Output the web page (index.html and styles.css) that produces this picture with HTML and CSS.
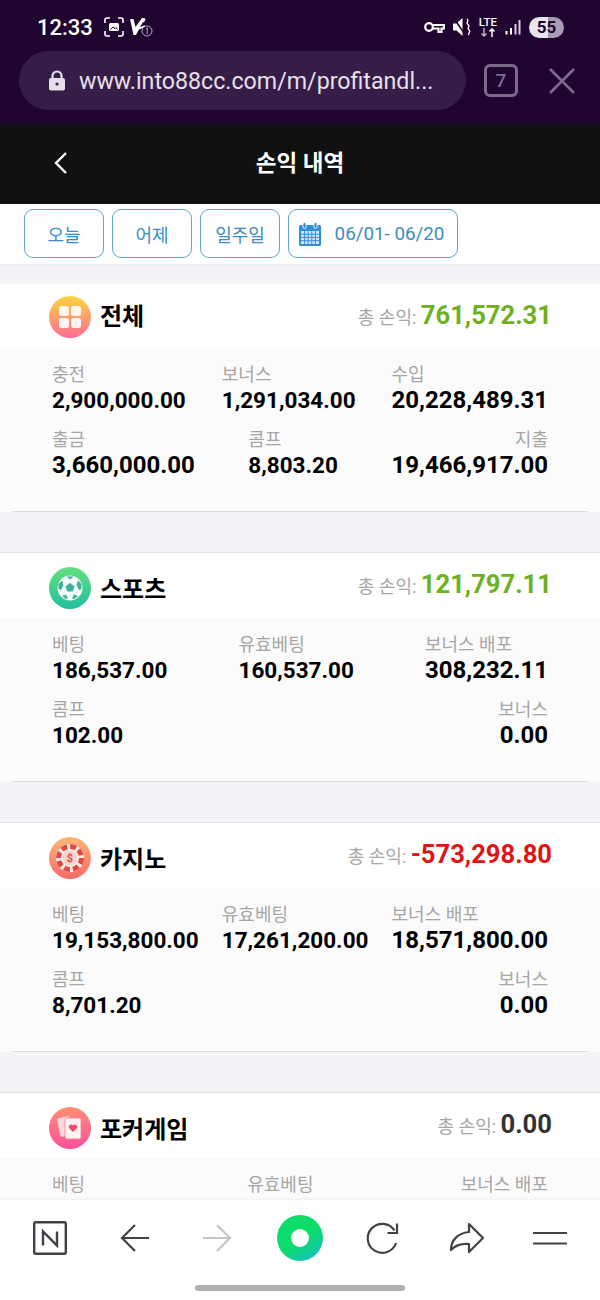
FILE: index.html
```html
<!DOCTYPE html>
<html lang="ko">
<head>
    <meta charset="UTF-8">
    <meta name="viewport" content="width=device-width, initial-scale=1.0">
    <title>손익 내역</title>
    <link rel="stylesheet" href="styles.css">
</head>
<body>
    <div class="browser-top">
        <div class="status-bar">
            <div class="status-left">
                <span class="clock">12:33</span>
                <svg class="status-icon" width="20" height="20" viewBox="0 0 20 20" fill="none" stroke="#fff" stroke-width="1.6">
                    <path d="M1 6V3a2 2 0 0 1 2-2h3M14 1h3a2 2 0 0 1 2 2v3M19 14v3a2 2 0 0 1-2 2h-3M6 19H3a2 2 0 0 1-2-2v-3"/>
                    <rect x="5" y="6" width="10" height="8" rx="1.5" fill="#fff" stroke="none"/>
                    <path d="M6.5 12.5l2.5-2.5 2 1.5 1-1 1.500 2" stroke="#1f0530" stroke-width="1"/>
                </svg>
                <svg class="status-icon" width="24" height="22" viewBox="0 0 24 22">
                    <path d="M1 3h3.500l2 8L13 2h3L7 19H4.500z" fill="#fff"/>
                    <path d="M9 13l7-3M14 6l2-3" stroke="#fff" stroke-width="1.800"/>
                    <circle cx="18" cy="15" r="5" fill="#1f0530" stroke="#b9aec2" stroke-width="1"/>
                    <path d="M17 12.800l1.200-.8v6" fill="none" stroke="#b9aec2" stroke-width="1"/>
                </svg>
            </div>
            <div class="status-right">
                <svg width="21" height="13" viewBox="0 0 21 13" fill="none" stroke="#fff" stroke-width="2.200">
                    <circle cx="5" cy="6" r="3.800"/>
                    <path d="M8.800 4H20v3.500h-2.500V11h-3V7.500H8.800"/>
                </svg>
                <svg width="18" height="20" viewBox="0 0 18 20">
                    <path d="M0 6.500h3.500L9.500 1v18l-6-5.500H0z" fill="#fff"/>
                    <path d="M1 1.500l11 16" stroke="#1f0530" stroke-width="1.500"/>
                    <path d="M14 2c2.500 2-1.500 3.500 1 5.500s-1.500 3.500 1 5.500-1.500 3 0 5" fill="none" stroke="#fff" stroke-width="1.400"/>
                </svg>
                <div class="lte">
                    <span>LTE</span>
                    <svg width="16" height="9" viewBox="0 0 16 9" fill="none" stroke-width="1.500">
                        <path d="M4 0v8M1.500 5.500L4 8l2.500-2.500" stroke="#b9aec2"/>
                        <path d="M12 9V1M9.500 3.500L12 1l2.500 2.500" stroke="#fff"/>
                    </svg>
                </div>
                <svg width="16" height="16" viewBox="0 0 16 16" fill="#fff">
                    <rect x="0.500" y="12" width="2" height="3.500"/>
                    <rect x="5" y="9" width="2" height="6.500"/>
                    <rect x="9.500" y="5" width="2" height="10.500" fill="#d8d0de"/>
                    <rect x="13.500" y="1" width="2" height="14.500" fill="#d8d0de"/>
                </svg>
                <span class="battery">55</span>
            </div>
        </div>
        <div class="url-row">
            <div class="url-bar">
                <svg width="18" height="21" viewBox="0 0 18 21">
                    <path d="M4.500 9V6a4.500 4.500 0 0 1 9 0v3" fill="none" stroke="#e4dfe8" stroke-width="2.200"/>
                    <rect x="1" y="8" width="16" height="12.500" rx="2" fill="#e4dfe8"/>
                    <circle cx="9" cy="14" r="1.600" fill="#361d47"/>
                </svg>
                <span class="url-text">www.into88cc.com/m/profitandl...</span>
            </div>
            <div class="tab-count">7</div>
            <svg class="url-close" width="28" height="28" viewBox="0 0 28 28" stroke="#7d6a8b" stroke-width="2.600">
                <path d="M2 2l24 24M26 2L2 26"/>
            </svg>
        </div>
    </div>

    <div class="main">
        <div class="page-head">
            <svg class="back" width="16" height="24" viewBox="0 0 16 24" fill="none" stroke="#fff" stroke-width="2.400">
                <path d="M13 2L3 12l10 10"/>
            </svg>
            <h1>손익 내역</h1>
        </div>

        <div class="filters">
            <button class="filter">오늘</button>
            <button class="filter">어제</button>
            <button class="filter">일주일</button>
            <button class="filter filter-date">
                <svg width="22" height="24" viewBox="0 0 22 24">
                    <rect x="0" y="3" width="22" height="21" rx="1.500" fill="#2f8fdc"/>
                    <rect x="4" y="0.500" width="3" height="6" rx="1.500" fill="#2f8fdc" stroke="#fff" stroke-width="0.800"/>
                    <rect x="15" y="0.500" width="3" height="6" rx="1.500" fill="#2f8fdc" stroke="#fff" stroke-width="0.800"/>
                    <path d="M2 9h18v13H2z" fill="#d3e7f8"/>
                    <path d="M2 12.200h18M2 15.400h18M2 18.700h18M5.600 9v13M9.200 9v13M12.800 9v13M16.400 9v13" stroke="#2f8fdc" stroke-width="1"/>
                </svg>
                <span>06/01- 06/20</span>
            </button>
        </div>

        <div class="card card-first">
            <div class="card-head">
                <svg class="game-icon" width="42" height="42" viewBox="0 0 42 42">
                    <defs>
                        <linearGradient id="grad-all" x1="0" y1="0" x2="0" y2="1">
                            <stop offset="0" stop-color="#ffd53d"/>
                            <stop offset="1" stop-color="#fb6c97"/>
                        </linearGradient>
                    </defs>
                    <circle cx="21" cy="21" r="21" fill="url(#grad-all)"/>
                    <g fill="#fff" fill-opacity="0.900">
                        <rect x="10" y="10" width="10" height="10" rx="2.500"/>
                        <rect x="22" y="10" width="10" height="10" rx="2.500"/>
                        <rect x="10" y="22" width="10" height="10" rx="2.500"/>
                        <rect x="22" y="22" width="10" height="10" rx="2.500"/>
                    </g>
                </svg>
                <h2>전체</h2>
                <div class="total">총 손익: <b class="plus">761,572.31</b></div>
            </div>
            <div class="card-body">
                <div class="stat-row">
                    <div class="stat"><span>충전</span><b>2,900,000.00</b></div>
                    <div class="stat"><span>보너스</span><b>1,291,034.00</b></div>
                    <div class="stat stat-big"><span>수입</span><b>20,228,489.31</b></div>
                </div>
                <div class="stat-row">
                    <div class="stat stat-big"><span>출금</span><b>3,660,000.00</b></div>
                    <div class="stat"><span>콤프</span><b>8,803.20</b></div>
                    <div class="stat stat-big stat-right"><span>지출</span><b>19,466,917.00</b></div>
                </div>
            </div>
        </div>

        <div class="card">
            <div class="card-head">
                <svg class="game-icon" width="42" height="42" viewBox="0 0 42 42">
                    <defs>
                        <linearGradient id="grad-sports" x1="0" y1="0" x2="0" y2="1">
                            <stop offset="0" stop-color="#63e07c"/>
                            <stop offset="1" stop-color="#21bfa0"/>
                        </linearGradient>
                    </defs>
                    <circle cx="21" cy="21" r="21" fill="url(#grad-sports)"/>
                    <circle cx="21" cy="21" r="12.500" fill="#f4fbf8"/>
                    <g fill="#3cb398">
                        <path d="M21 16l4.500 3.300-1.700 5.300h-5.600l-1.700-5.300z"/>
                        <path d="M17.500 9.500h7L21 12.500z"/>
                        <path d="M9.500 17l3.500-3.500 1.500 4.500-2.500 5-2.500-1z"/>
                        <path d="M32.500 17L29 13.500 27.500 18l2.500 5 2.500-1z"/>
                        <path d="M13 29l4-1.500 2 4-2 .5z"/>
                        <path d="M29 29l-4-1.500-2 4 2 .5z"/>
                    </g>
                </svg>
                <h2>스포츠</h2>
                <div class="total">총 손익: <b class="plus">121,797.11</b></div>
            </div>
            <div class="card-body">
                <div class="stat-row">
                    <div class="stat"><span>베팅</span><b>186,537.00</b></div>
                    <div class="stat"><span>유효베팅</span><b>160,537.00</b></div>
                    <div class="stat stat-big"><span>보너스 배포</span><b>308,232.11</b></div>
                </div>
                <div class="stat-row">
                    <div class="stat"><span>콤프</span><b>102.00</b></div>
                    <div class="stat stat-big stat-right"><span>보너스</span><b>0.00</b></div>
                </div>
            </div>
        </div>

        <div class="card">
            <div class="card-head">
                <svg class="game-icon" width="42" height="42" viewBox="0 0 42 42">
                    <defs>
                        <linearGradient id="grad-casino" x1="0" y1="0" x2="0" y2="1">
                            <stop offset="0" stop-color="#ffb673"/>
                            <stop offset="1" stop-color="#fa6a68"/>
                        </linearGradient>
                    </defs>
                    <circle cx="21" cy="21" r="21" fill="url(#grad-casino)"/>
                    <circle cx="21" cy="21" r="14" fill="#fbeee8"/>
                    <circle cx="21" cy="21" r="11.500" fill="none" stroke="#e2483f" stroke-width="5" stroke-dasharray="6 3"/>
                    <circle cx="21" cy="21" r="7.500" fill="#f9d4c8"/>
                    <text class="chip-sign" x="21" y="25" text-anchor="middle">$</text>
                </svg>
                <h2>카지노</h2>
                <div class="total">총 손익: <b class="minus">-573,298.80</b></div>
            </div>
            <div class="card-body">
                <div class="stat-row">
                    <div class="stat"><span>베팅</span><b>19,153,800.00</b></div>
                    <div class="stat"><span>유효베팅</span><b>17,261,200.00</b></div>
                    <div class="stat stat-big"><span>보너스 배포</span><b>18,571,800.00</b></div>
                </div>
                <div class="stat-row">
                    <div class="stat"><span>콤프</span><b>8,701.20</b></div>
                    <div class="stat stat-big stat-right"><span>보너스</span><b>0.00</b></div>
                </div>
            </div>
        </div>

        <div class="card">
            <div class="card-head">
                <svg class="game-icon" width="42" height="42" viewBox="0 0 42 42">
                    <defs>
                        <linearGradient id="grad-poker" x1="0" y1="0" x2="0" y2="1">
                            <stop offset="0" stop-color="#ff8f72"/>
                            <stop offset="1" stop-color="#fd4f9f"/>
                        </linearGradient>
                    </defs>
                    <circle cx="21" cy="21" r="21" fill="url(#grad-poker)"/>
                    <rect x="9.500" y="10" width="13" height="19" rx="2" transform="rotate(-12 16 19)" fill="#fbd9dc"/>
                    <rect x="16" y="11" width="16" height="21" rx="2" fill="#fdf1f1" stroke="#fd7f8c" stroke-width="0.800"/>
                    <path d="M24 25l-4-4a2.400 2.400 0 0 1 4-2.600 2.400 2.400 0 0 1 4 2.600z" fill="#f2496f"/>
                </svg>
                <h2>포커게임</h2>
                <div class="total">총 손익: <b>0.00</b></div>
            </div>
            <div class="card-body">
                <!-- the browser bar covers the values of this row -->
                <div class="stat-row stat-row-cut">
                    <div class="stat"><span>베팅</span></div>
                    <div class="stat"><span>유효베팅</span></div>
                    <div class="stat stat-right"><span>보너스 배포</span></div>
                </div>
            </div>
        </div>
    </div>

    <div class="bottom-bar">
        <div class="nav-icons">
            <div class="nav-item">
                <svg width="34" height="34" viewBox="0 0 34 34" fill="none" stroke="#3f4347">
                    <rect x="1.200" y="1.200" width="31.600" height="31.600" rx="1.500" stroke-width="2.400"/>
                    <path d="M10 24.500V10.500l14 14V10.500" stroke-width="2.400"/>
                </svg>
            </div>
            <div class="nav-item nav-back">
                <svg width="30" height="30" viewBox="0 0 30 30" fill="none" stroke="#3f4347" stroke-width="2.200">
                    <path d="M29 15H2M15 2L2 15l13 13"/>
                </svg>
            </div>
            <div class="nav-item">
                <svg width="30" height="30" viewBox="0 0 30 30" fill="none" stroke="#c4c6c8" stroke-width="2.200">
                    <path d="M1 15h27M15 2l13 13-13 13"/>
                </svg>
            </div>
            <div class="nav-item">
                <svg width="46" height="46" viewBox="0 0 46 46">
                    <defs>
                        <linearGradient id="grad-home" x1="0.200" y1="0.100" x2="0.800" y2="1">
                            <stop offset="0.500" stop-color="#0ddc6b"/>
                            <stop offset="1" stop-color="#14bdc0"/>
                        </linearGradient>
                    </defs>
                    <circle cx="23" cy="23" r="23" fill="url(#grad-home)"/>
                    <circle cx="23" cy="23" r="9" fill="#fff"/>
                </svg>
            </div>
            <div class="nav-item">
                <svg width="34" height="34" viewBox="0 0 34 34" fill="none" stroke="#3f4347" stroke-width="2.200">
                    <path d="M30 22a14.500 14.500 0 1 1-1.500-12.500"/>
                    <path d="M31 2.500V12h-9.500"/>
                </svg>
            </div>
            <div class="nav-item">
                <svg width="36" height="32" viewBox="0 0 36 32" fill="none" stroke="#3f4347" stroke-width="2.200" stroke-linejoin="round">
                    <path d="M20 2l14 14-14 14v-8c-7-.5-13 .5-18 6 0-10 7-17 18-18z"/>
                </svg>
            </div>
            <div class="nav-item">
                <svg width="36" height="14" viewBox="0 0 36 14" stroke="#3f4347" stroke-width="2.200">
                    <path d="M1 2h34M1 12.500h34"/>
                </svg>
            </div>
        </div>
        <div class="home-line"></div>
    </div>
</body>
</html>
```

FILE: styles.css
```css
* {
    box-sizing: border-box;
}

html, body {
    margin: 0;
    padding: 0;
}

body {
    width: 600px;
    height: 1300px;
    display: flex;
    flex-direction: column;
    overflow: hidden;
    font-family: Roboto, "Noto Sans CJK KR", sans-serif;
    background-color: #f3f4f7;
    color: #000;
}

/* browser chrome */
.browser-top {
    height: 124px;
    background-color: #1f0530;
}

.status-bar {
    height: 51px;
    padding: 3px 37px 0;
    display: flex;
    justify-content: space-between;
    align-items: center;
    color: #fff;
}

.status-left, .status-right {
    display: flex;
    align-items: center;
}

.clock {
    font-size: 22px;
    font-weight: 500;
    margin-right: 11px;
}

.status-left .status-icon {
    margin-right: 5px;
}

.status-right {
    gap: 8px;
    margin-right: -1px;
}

.lte {
    display: flex;
    flex-direction: column;
    align-items: center;
    font-size: 11.500px;
    font-weight: 500;
    line-height: 11px;
}

.battery {
    width: 35px;
    height: 21px;
    border-radius: 11px;
    background: linear-gradient(90deg, #e9e5ec 55%, #a79cb0 55%);
    color: #1f0530;
    font-size: 17px;
    font-weight: 700;
    line-height: 21px;
    text-align: center;
}

.url-row {
    display: flex;
    align-items: center;
    padding-left: 19px;
}

.url-bar {
    width: 447px;
    height: 59px;
    padding-left: 29px;
    display: flex;
    align-items: center;
    gap: 13px;
    background-color: #361d47;
    border-radius: 30px;
}

.url-text {
    font-size: 23.200px;
    color: #e6e0ea;
    white-space: nowrap;
}

.tab-count {
    width: 34px;
    height: 33px;
    margin-left: 18px;
    border: 3px solid #7d6a8b;
    border-radius: 6px;
    color: #7d6a8b;
    font-size: 19px;
    font-weight: 500;
    line-height: 27px;
    text-align: center;
}

.url-close {
    margin-left: 30px;
}

/* page */
.main {
    flex: 1;
    min-height: 0;
    overflow: hidden;
}

.page-head {
    height: 80px;
    padding-bottom: 6px;
    position: relative;
    display: flex;
    align-items: center;
    justify-content: center;
    background-color: #111;
}

.page-head h1 {
    margin: 0;
    font-size: 22.500px;
    font-weight: 700;
    color: #fff;
}

.back {
    position: absolute;
    left: 53px;
    top: 27px;
}

.filters {
    height: 60px;
    padding: 5px 0 0 24px;
    display: flex;
    align-items: flex-start;
    gap: 8px;
    background-color: #fff;
    box-shadow: 0 1px 3px rgba(0, 0, 0, 0.05);
}

.filter {
    width: 80px;
    height: 49px;
    padding: 0;
    background-color: #fff;
    border: 1.500px solid #5fa5c6;
    border-radius: 9px;
    color: #3b8dc3;
    font-family: inherit;
    font-size: 18px;
}

.filter-date {
    width: 170px;
    padding-right: 3px;
    font-size: 18.800px;
    display: flex;
    align-items: center;
    justify-content: center;
    gap: 14px;
}

.card {
    margin-top: 40px;
    border-top: 1px solid #e2e2e2;
    background-color: #fff;
}

.card-first {
    margin-top: 20px;
    border-top: 0;
}

.card-head {
    height: 65px;
    padding: 0 48px 0 49px;
    display: flex;
    align-items: center;
}

.game-icon {
    flex-shrink: 0;
    margin-top: 4px;
}

.card-head h2 {
    margin: 8px 0 0 9px;
    font-size: 24px;
    font-weight: 700;
    line-height: 34px;
}

.total {
    margin-left: auto;
    margin-top: -3px;
    font-size: 18px;
    color: #a6a6a6;
    white-space: nowrap;
}

.total b {
    font-size: 25.600px;
    font-weight: 700;
    color: #333;
}

.total .plus {
    color: #6eb11e;
}

.total .minus {
    color: #e01414;
}

.card-first .card-head {
    height: 64px;
}

.card-first .game-icon {
    margin-top: 1px;
}

.card-first .card-head h2 {
    margin-top: 2px;
}

.card-first .total {
    margin-top: -2px;
}

.card-body {
    height: 164px;
    padding: 14px 52px 0;
    background-color: #fbfbfb;
    position: relative;
}

.card-body::after {
    content: "";
    position: absolute;
    left: 12px;
    right: 12px;
    bottom: 0;
    border-bottom: 1px solid #dcdcdc;
}

.stat-row {
    display: flex;
    justify-content: space-between;
    margin-bottom: 15px;
}

.stat-row-cut .stat {
    min-width: 48px;
}

.stat span, .stat b {
    display: block;
    white-space: nowrap;
}

.stat span {
    font-size: 18px;
    line-height: 26px;
    color: #a6a6a6;
}

.stat b {
    font-size: 22.500px;
    font-weight: 700;
    line-height: 24px;
    color: #000;
}

.stat-big b {
    font-size: 24px;
}

.stat-right {
    text-align: right;
}

.chip-sign {
    font-size: 11px;
    font-weight: 700;
    fill: #e2483f;
}

/* bottom browser bar */
.bottom-bar {
    height: 100px;
    background-color: #fff;
    box-shadow: 0 -1px 3px rgba(0, 0, 0, 0.06);
    position: relative;
}

.nav-icons {
    height: 85px;
    padding: 0 8px 9px;
    display: flex;
    align-items: center;
}

.nav-item {
    flex: 1;
    display: flex;
    align-items: center;
    justify-content: center;
}

.nav-back svg {
    margin-left: 3px;
}

.home-line {
    width: 210px;
    height: 6px;
    margin: 0 auto;
    border-radius: 3px;
    background-color: #b0b0b0;
}
```
